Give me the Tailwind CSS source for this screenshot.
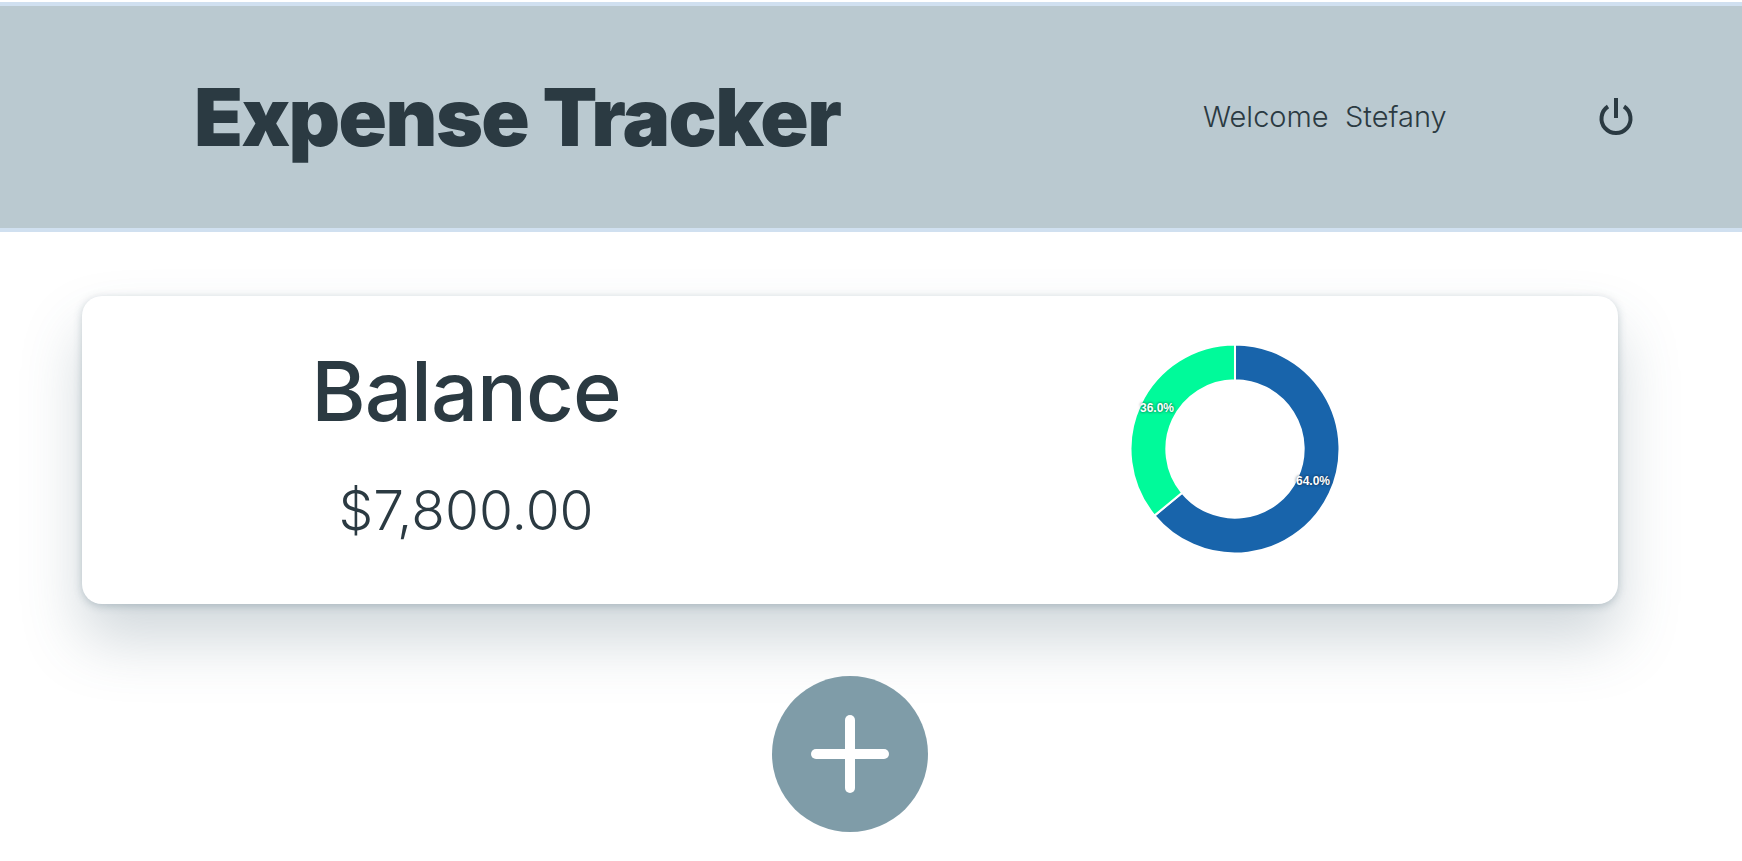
<!DOCTYPE html>
<html lang="en">
<head>
    <meta charset="UTF-8">
    <meta name="viewport" content="width=device-width, initial-scale=1.0">
    <title>Expense Tracker</title>
    <script src="https://cdn.jsdelivr.net/npm/@tailwindcss/browser@4"></script>
</head>
<body class="bg-white text-[#2b3a42] font-['Inter',sans-serif] overflow-hidden">
    <header class="mt-[2px] h-[230px] bg-[#bac9d0] border-y-4 border-[#d0e0f0] flex items-center pl-[194px]">
        <h1 class="w-[1009px] text-[80px] font-black leading-none tracking-[-1.6px]">Expense Tracker</h1>
        <p class="text-[29px] font-light">Welcome&nbsp; Stefany</p>
        <button class="ml-auto mr-[108px]" aria-label="Log out">
            <svg class="w-[36px] h-[40px]" viewBox="0 0 36 40" fill="none" stroke="#2b3a42" stroke-width="4">
                <path d="M18 1V21"/>
                <path d="M10 9.5A14.5 14.5 0 1 0 26 9.5"/>
            </svg>
        </button>
    </header>

    <main class="w-[1700px]">
        <section class="mx-[82px] mt-[64px] h-[308px] bg-white rounded-[20px] grid grid-cols-2 items-center shadow-[0_2px_8px_rgba(70,100,115,0.3),0_36px_60px_rgba(70,100,115,0.25)]">
            <div class="flex flex-col items-center -mt-[12px]">
                <h2 class="text-[83px] font-medium leading-none tracking-[-1px]">Balance</h2>
                <p class="mt-[50px] text-[55px] font-light leading-none">$7,800.00</p>
            </div>
            <div class="flex justify-center">
                <div class="relative w-[210px] h-[210px] -mt-[2px] ml-[2px]">
                    <svg class="w-full h-full" viewBox="0 0 208 208" stroke="white" stroke-width="2">
                        <path fill="#1864ab" d="M104 .5A103.5 103.5 0 1 1 24.25 169.97L51.61 147.34A68 68 0 1 0 104 36Z"/>
                        <path fill="#00fa9a" d="M24.25 169.97A103.5 103.5 0 0 1 104 .5L104 36A68 68 0 0 0 51.61 147.34Z"/>
                    </svg>
                    <span class="absolute left-[10px] top-[57px] text-[12px] leading-[14px] font-bold text-white font-['Liberation_Sans',sans-serif] [text-shadow:0_0_3px_rgba(0,0,0,0.7)]">36.0%</span>
                    <span class="absolute left-[166px] top-[130px] text-[12px] leading-[14px] font-bold text-white font-['Liberation_Sans',sans-serif] [text-shadow:0_0_3px_rgba(0,0,0,0.7)]">64.0%</span>
                </div>
            </div>
        </section>

        <div class="flex justify-center mt-[72px]">
            <button class="w-[156px] h-[156px] rounded-full bg-[#7f9ca8] flex items-center justify-center" aria-label="Add expense">
                <svg class="w-[80px] h-[80px]" viewBox="0 0 80 80" stroke="white" stroke-width="10" stroke-linecap="round">
                    <path d="M40 6V74"/>
                    <path d="M6 40H74"/>
                </svg>
            </button>
        </div>
    </main>
</body>
</html>
